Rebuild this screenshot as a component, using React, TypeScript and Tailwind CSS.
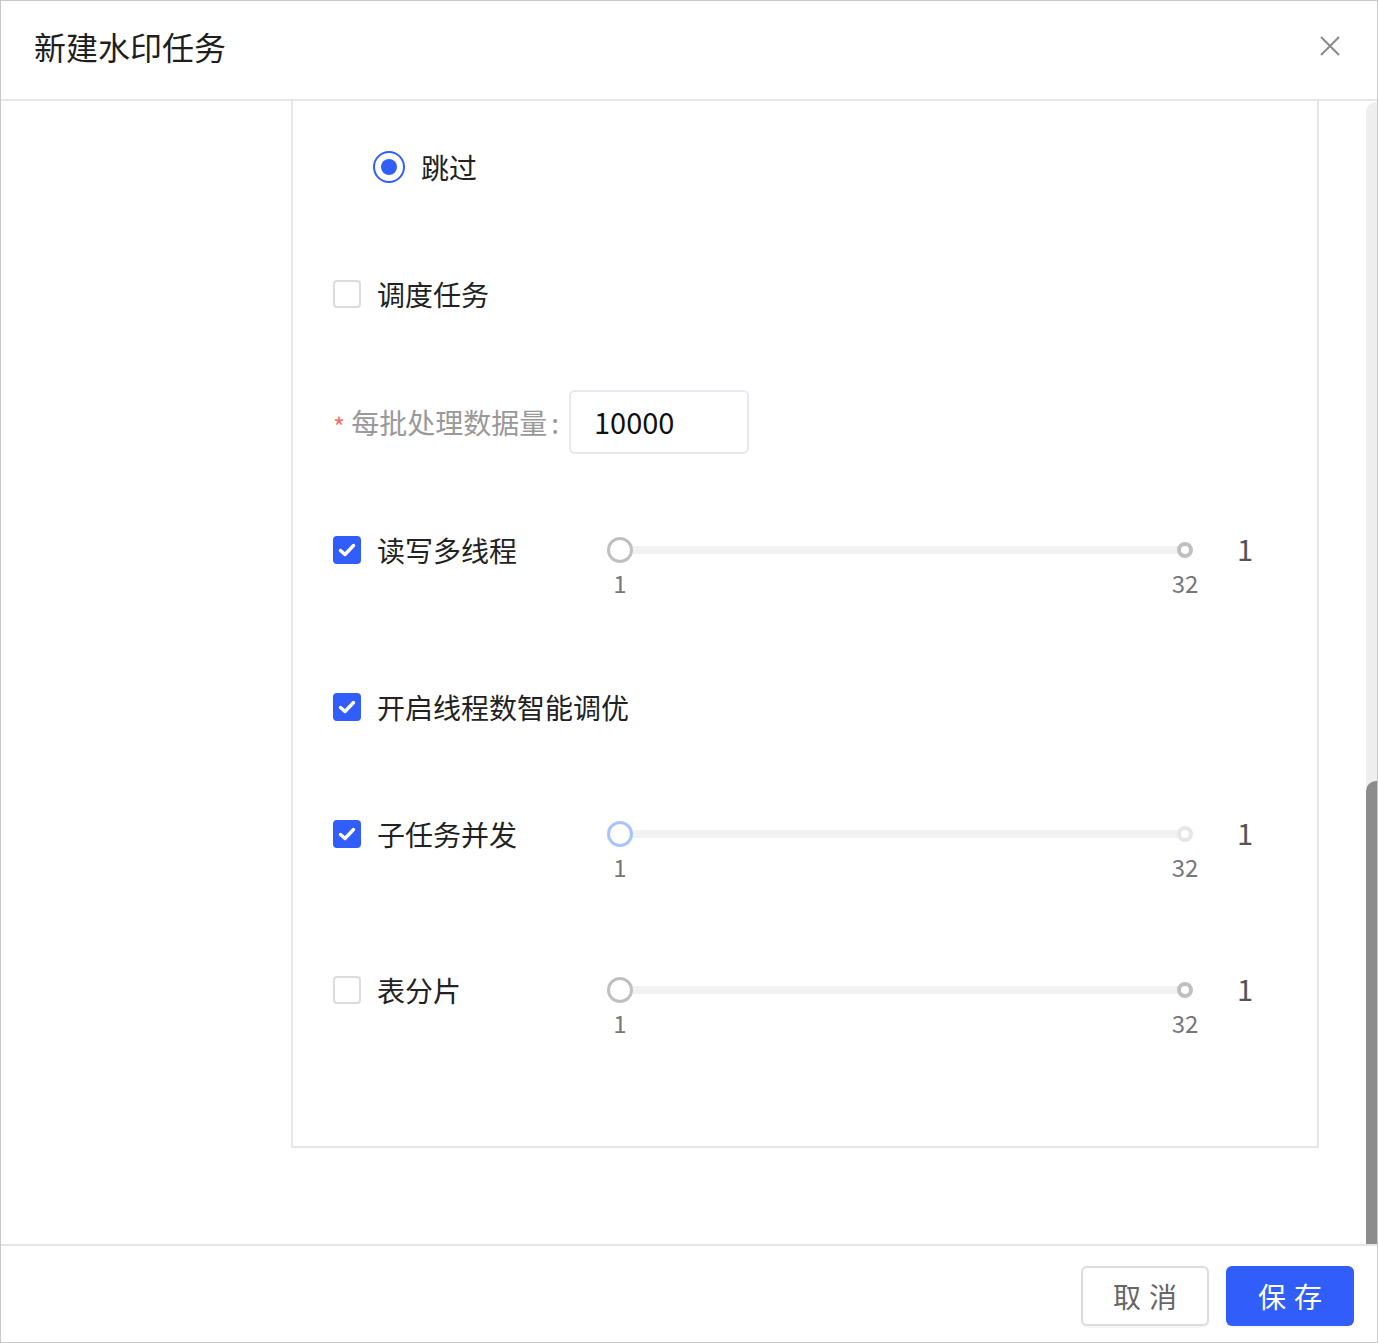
import React from "react";

const font = { fontFamily: '"Noto Sans CJK SC", "Noto Sans", sans-serif' };

function Checkbox({ checked }: { checked: boolean }) {
  if (checked) {
    return (
      <span className="flex h-[28px] w-[28px] shrink-0 items-center justify-center rounded-[4px] bg-[#315efb]">
        <svg width="22" height="22" viewBox="0 0 22 22" aria-hidden>
          <path d="M4.5 11.5 L9 15.5 L17.5 6.5" fill="none" stroke="#fff" strokeWidth="3.4" strokeLinecap="round" strokeLinejoin="round" />
        </svg>
      </span>
    );
  }
  return <span className="h-[28px] w-[28px] shrink-0 rounded-[4px] border-2 border-[#dcdcdc] bg-white" />;
}

function Slider({ active }: { active?: boolean }) {
  return (
    <div className="flex h-[28px] items-start">
      <div className="flex w-[586px] flex-col">
        <div className="flex h-[28px] items-center">
          <span
            className={
              "z-10 h-[26px] w-[26px] shrink-0 rounded-full border-[3px] bg-white " +
              (active ? "border-[#a9c4fd]" : "border-[#c0c0c0]")
            }
          />
          <span className="-mx-[8px] h-[8px] flex-1 bg-[#f2f2f2]" />
          <span
            className={
              "z-10 h-[16px] w-[16px] shrink-0 rounded-full border-[4px] bg-white " +
              (active ? "border-[#e6e6e6]" : "border-[#c0c0c0]")
            }
          />
        </div>
        <div className="mt-[3px] flex justify-between text-[24px] leading-[32px] text-[#777]">
          <span className="w-[26px] text-center">1</span>
          <span className="flex w-[16px] justify-center">32</span>
        </div>
      </div>
      <span className="ml-[44px] text-[29px] leading-[24px] text-[#555]">1</span>
    </div>
  );
}

function CheckRow({ checked, label, slider, active }: { checked: boolean; label: string; slider?: boolean; active?: boolean }) {
  return (
    <div className="flex h-[28px] items-start">
      <div className="flex h-[28px] w-[274px] items-center gap-[16px]">
        <Checkbox checked={checked} />
        <span className="whitespace-nowrap text-[28px] leading-none text-[#222]">{label}</span>
      </div>
      {slider && <Slider active={active} />}
    </div>
  );
}

export default function App() {
  return (
    <div className="flex h-[1343px] w-[1378px] flex-col border border-[#c8c8c8] bg-white" style={font}>
      {/* header */}
      <header className="flex h-[100px] shrink-0 items-center justify-between border-b-2 border-[#e6e6e6] pb-[8px] pl-[33px] pr-[37px]">
        <h1 className="text-[32px] leading-none text-[#1f1f1f]">新建水印任务</h1>
        <svg width="20" height="20" viewBox="0 0 20 20" aria-hidden>
          <path d="M1 1 L19 19 M19 1 L1 19" stroke="#8a8a8a" strokeWidth="2" />
        </svg>
      </header>

      {/* body */}
      <div className="flex min-h-0 flex-1">
        <div className="flex-1 pl-[290px] pr-[47px]">
          <div className="flex h-[1047px] flex-col border-x-2 border-b-2 border-[#e6e6e6] pl-[40px] pt-[50px]">
            <div className="flex h-[32px] items-center gap-[16px] pl-[40px]">
              <span className="flex h-[32px] w-[32px] items-center justify-center rounded-full border-2 border-[#315efb]">
                <span className="h-[16px] w-[16px] rounded-full bg-[#315efb]" />
              </span>
              <span className="text-[28px] leading-none text-[#222]">跳过</span>
            </div>

            <div className="mt-[97px]">
              <CheckRow checked={false} label="调度任务" />
            </div>

            <div className="mt-[82px] flex h-[64px] items-center">
              <span className="mr-[6px] mt-[8px] text-[26px] leading-none text-[#f56c6c]">*</span>
              <span className="text-[28px] leading-none text-[#999]">每批处理数据量</span>
              <span className="ml-[4px] text-[28px] leading-none text-[#999]">:</span>
              <div className="ml-[10px] flex h-[64px] w-[180px] items-center rounded-[6px] border-2 border-[#e6e9f2] pl-[23px] text-[29px] text-[#111]">
                10000
              </div>
            </div>

            <div className="mt-[82px]">
              <CheckRow checked label="读写多线程" slider />
            </div>

            <div className="mt-[129px]">
              <CheckRow checked label="开启线程数智能调优" />
            </div>

            <div className="mt-[99px]">
              <CheckRow checked label="子任务并发" slider active />
            </div>

            <div className="mt-[128px]">
              <CheckRow checked={false} label="表分片" slider />
            </div>
          </div>
        </div>
        {/* scrollbar */}
        <div className="mt-[1px] flex w-[11px] shrink-0 flex-col rounded-tl-[10px] bg-[#eeeeee]">
          <div className="flex-1" />
          <div className="h-[463px] rounded-tl-[10px] bg-[#8c8c8c]" />
        </div>
      </div>

      {/* footer */}
      <footer className="flex h-[98px] shrink-0 items-center justify-end gap-[17px] border-t-2 border-[#e6e6e6] pr-[23px] pt-[4px]">
        <button className="h-[60px] w-[128px] rounded-[6px] border-2 border-[#dcdcdc] bg-white pl-[8px] text-[28px] tracking-[8px] text-[#666] shadow-[0_2px_2px_rgba(0,0,0,0.04)]">
          取消
        </button>
        <button className="h-[60px] w-[128px] rounded-[6px] bg-[#315efb] pl-[8px] text-[28px] tracking-[8px] text-white shadow-[0_2px_2px_rgba(0,0,0,0.04)]">
          保存
        </button>
      </footer>
    </div>
  );
}
